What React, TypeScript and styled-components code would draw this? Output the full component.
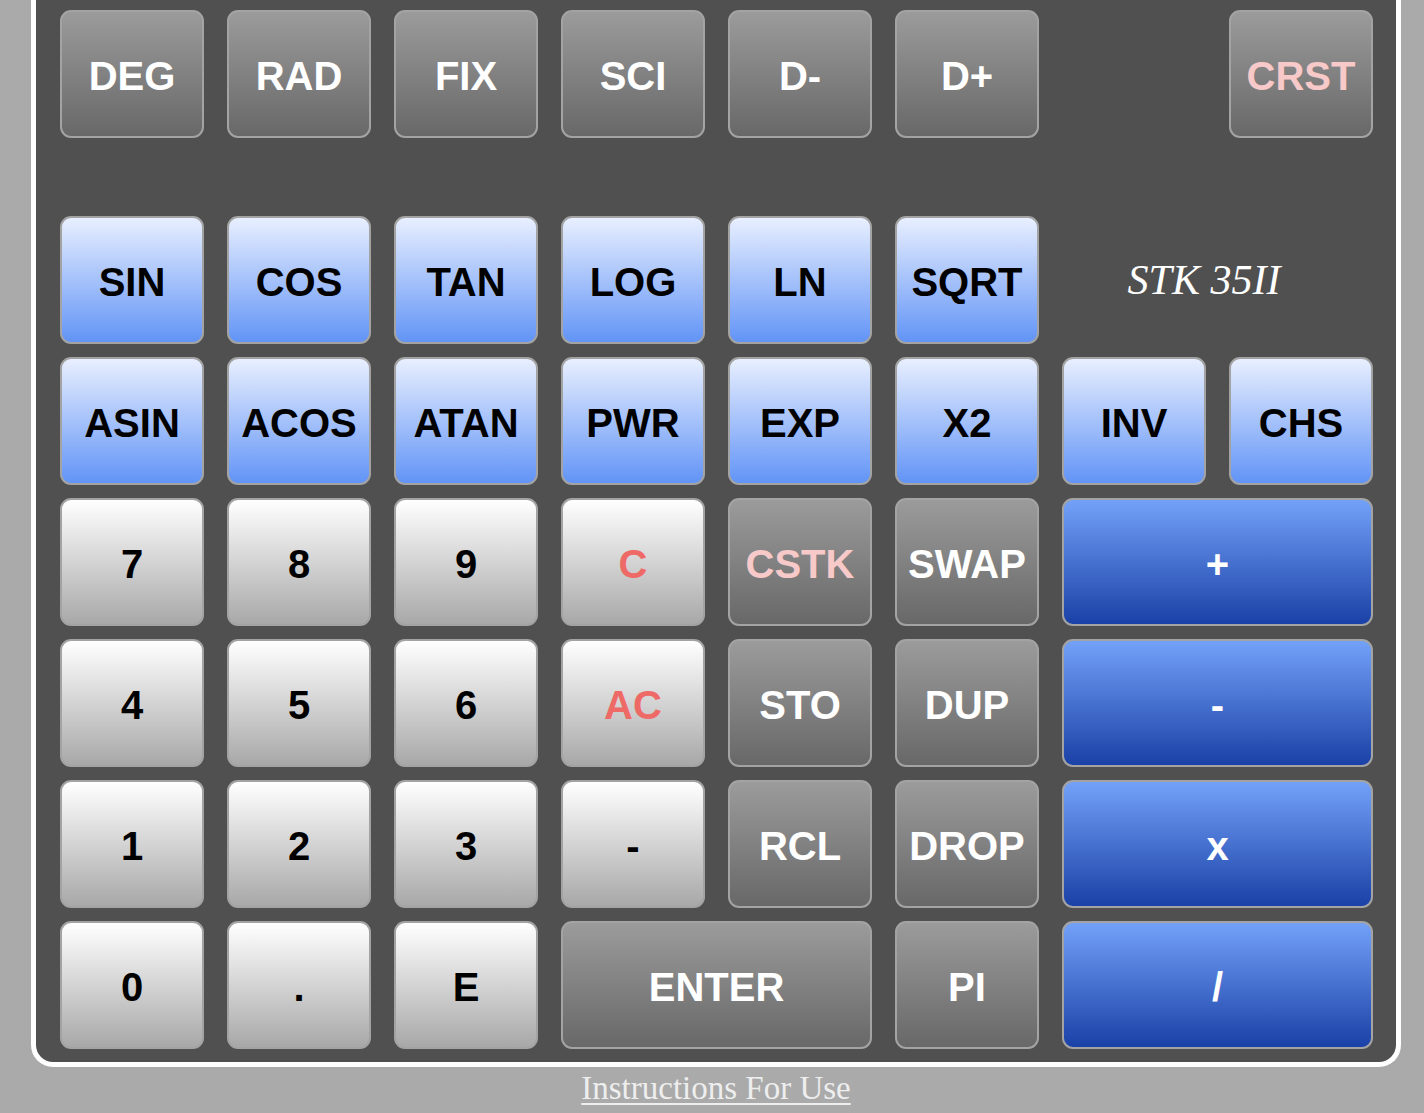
import React from "react";
import styled, { createGlobalStyle, css } from "styled-components";

const Global = createGlobalStyle`
  html, body { margin: 0; padding: 0; background: #aaaaaa; }
  body { font-family: "Liberation Sans", Arial, sans-serif; }
`;

const Page = styled.div`
  display: flex;
  flex-direction: column;
  align-items: center;
  width: 1424px;
  padding-left: 8px;
  box-sizing: border-box;
`;

const Panel = styled.div`
  width: 1370px;
  box-sizing: border-box;
  background: #505050;
  border: 5px solid #ffffff;
  border-top: none;
  border-radius: 0 0 22px 22px;
  padding: 10px 23px 13px 24px;
  display: grid;
  grid-template-columns: repeat(8, 144px);
  grid-template-rows: 128px 52px repeat(6, 128px);
  column-gap: 23px;
  row-gap: 13px;
`;

type Variant = "dark" | "light" | "white" | "op";
type Tone = "normal" | "pink" | "red";

const variants = {
  dark: css`
    background: linear-gradient(#9b9b9b, #686868);
    color: #ffffff;
  `,
  light: css`
    background: linear-gradient(#e8efff, #6294f6);
    color: #000000;
  `,
  white: css`
    background: linear-gradient(#ffffff, #a8a8a8);
    color: #000000;
  `,
  op: css`
    background: linear-gradient(#73a1f8, #1a41a7);
    color: #ffffff;
  `,
};

const Key = styled.button<{ $v: Variant; $tone?: Tone; $span?: number; $col?: number }>`
  box-sizing: border-box;
  border: 2px solid #a3a3a3;
  border-radius: 11px;
  font-family: "Liberation Sans", Arial, sans-serif;
  font-weight: bold;
  font-size: 40px;
  padding: 4px 0 0 0;
  margin: 0;
  display: flex;
  align-items: center;
  justify-content: center;
  white-space: nowrap;
  ${(p) => variants[p.$v]}
  ${(p) => p.$tone === "pink" && css`color: #f8c9c9;`}
  ${(p) => p.$tone === "red" && css`color: #ee6a66;`}
  ${(p) => p.$span && css`grid-column: span ${p.$span};`}
  ${(p) => p.$col && css`grid-column-start: ${p.$col};`}
`;

const Spacer = styled.div`
  grid-column: 1 / -1;
`;

const Brand = styled.div`
  grid-column: span 2;
  display: flex;
  align-items: center;
  justify-content: center;
  padding-right: 27px;
  font-family: "Liberation Serif", "Times New Roman", serif;
  font-style: italic;
  font-size: 42px;
  color: #ffffff;
`;

const Link = styled.a`
  margin-top: 3px;
  font-family: "Liberation Serif", "Times New Roman", serif;
  font-size: 33px;
  color: #eeeeee;
  text-decoration: underline;
  text-decoration-thickness: 2px;
  text-underline-offset: 4px;
`;

type K = { l: string; v: Variant; t?: Tone; span?: number; col?: number };

const row1: K[] = [
  { l: "DEG", v: "dark" },
  { l: "RAD", v: "dark" },
  { l: "FIX", v: "dark" },
  { l: "SCI", v: "dark" },
  { l: "D-", v: "dark" },
  { l: "D+", v: "dark" },
  { l: "CRST", v: "dark", t: "pink", col: 8 },
];

const row2: K[] = ["SIN", "COS", "TAN", "LOG", "LN", "SQRT"].map((l) => ({ l, v: "light" as Variant }));

const rest: K[] = [
  ...["ASIN", "ACOS", "ATAN", "PWR", "EXP", "X2", "INV", "CHS"].map((l) => ({ l, v: "light" as Variant })),
  { l: "7", v: "white" },
  { l: "8", v: "white" },
  { l: "9", v: "white" },
  { l: "C", v: "white", t: "red" },
  { l: "CSTK", v: "dark", t: "pink" },
  { l: "SWAP", v: "dark" },
  { l: "+", v: "op", span: 2 },
  { l: "4", v: "white" },
  { l: "5", v: "white" },
  { l: "6", v: "white" },
  { l: "AC", v: "white", t: "red" },
  { l: "STO", v: "dark" },
  { l: "DUP", v: "dark" },
  { l: "-", v: "op", span: 2 },
  { l: "1", v: "white" },
  { l: "2", v: "white" },
  { l: "3", v: "white" },
  { l: "-", v: "white" },
  { l: "RCL", v: "dark" },
  { l: "DROP", v: "dark" },
  { l: "x", v: "op", span: 2 },
  { l: "0", v: "white" },
  { l: ".", v: "white" },
  { l: "E", v: "white" },
  { l: "ENTER", v: "dark", span: 2 },
  { l: "PI", v: "dark" },
  { l: "/", v: "op", span: 2 },
];

const renderKey = (k: K, i: number, prefix: string) => (
  <Key key={prefix + i} $v={k.v} $tone={k.t} $span={k.span} $col={k.col}>
    {k.l}
  </Key>
);

export default function App() {
  return (
    <>
      <Global />
      <Page>
        <Panel>
          {row1.map((k, i) => renderKey(k, i, "a"))}
          <Spacer />
          {row2.map((k, i) => renderKey(k, i, "b"))}
          <Brand>STK 35II</Brand>
          {rest.map((k, i) => renderKey(k, i, "c"))}
        </Panel>
        <Link href="#">Instructions For Use</Link>
      </Page>
    </>
  );
}
